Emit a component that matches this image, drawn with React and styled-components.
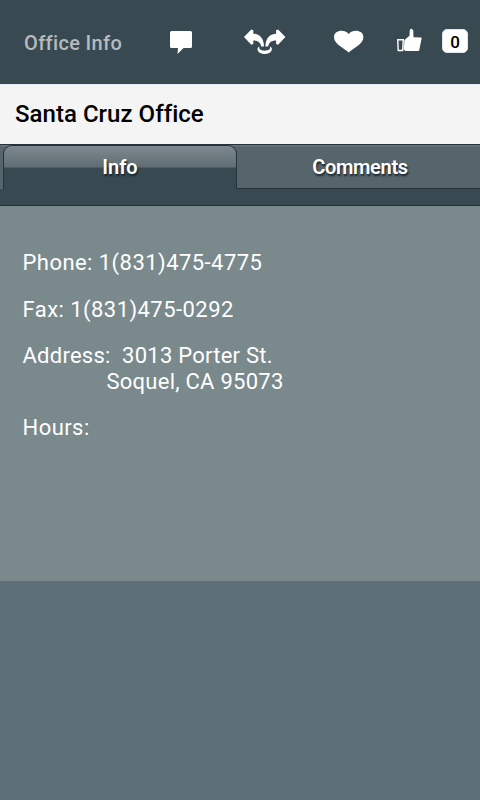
import React from 'react';
import styled, { createGlobalStyle } from 'styled-components';

const GlobalStyle = createGlobalStyle`
    body {
        margin: 0;
        background-color: #5d7078;
        font-family: Roboto, "Liberation Sans", sans-serif;
        font-variant-ligatures: none;
    }
`;

const Page = styled.div`
    display: flex;
    flex-direction: column;
    width: 480px;
    height: 800px;
    overflow: hidden;
    background-color: #5d7078;
`;

const Header = styled.header`
    display: flex;
    align-items: flex-start;
    box-sizing: border-box;
    height: 84px;
    padding: 28px 12px 0 24px;
    background-color: #394952;
`;

const HeaderTitle = styled.div`
    width: 146px;
    color: #b5bbbf;
    font-size: 20px;
    font-weight: 500;
    line-height: 30px;
    letter-spacing: 0.35px;
    white-space: nowrap;
`;

const Icon = styled.svg`
    display: block;
    flex: none;
    width: ${(props) => props.$width}px;
    height: 28px;
    margin-right: ${(props) => props.$gap}px;
    fill: #ffffff;
`;

const Count = styled.div`
    box-sizing: border-box;
    width: 26px;
    height: 24px;
    margin-top: 1px;
    border: 1px solid #dfe8ee;
    border-radius: 5px;
    background-color: #ffffff;
    color: #000000;
    font-size: 17px;
    font-weight: 500;
    line-height: 24px;
    text-align: center;
`;

const OfficeName = styled.h1`
    box-sizing: border-box;
    height: 60px;
    margin: 0;
    padding-left: 15px;
    border-top: 1px solid #e6eff5;
    background-color: #f4f4f4;
    color: #000000;
    font-size: 24px;
    font-weight: 500;
    line-height: 59px;
    letter-spacing: 0.03px;
`;

const TabBar = styled.nav`
    display: flex;
    box-sizing: border-box;
    height: 62px;
    border-top: 1px solid #26323b;
    border-bottom: 1px solid #222e36;
    background-color: #394952;
`;

const TabSlot = styled.div`
    box-sizing: border-box;
    width: ${(props) => props.$width}px;
    height: 44px;
    padding-left: ${(props) => (props.$active ? 3 : 0)}px;
    border-bottom: ${(props) => (props.$active ? 'none' : '1px solid #25323a')};
    background: linear-gradient(#66747a 0, #66747a 1px, #56656b 2px);
`;

const Tab = styled.div`
    box-sizing: border-box;
    height: ${(props) => (props.$active ? 44 : 43)}px;
    border: ${(props) => (props.$active ? '1px solid #25323a' : 'none')};
    border-bottom: none;
    border-radius: ${(props) => (props.$active ? '9px 9px 0 0' : '0')};
    background: ${(props) =>
        props.$active
            ? 'linear-gradient(#7d898e 0, #606d72 21px, #394952 22px)'
            : 'transparent'};
    color: #ffffff;
    font-size: 20px;
    font-weight: 600;
    line-height: ${(props) => (props.$active ? 42 : 44)}px;
    letter-spacing: ${(props) => (props.$active ? 0 : -0.3)}px;
    padding-left: ${(props) => (props.$active ? 0 : 3)}px;
    text-align: center;
    text-shadow: 1px 2px 2px #17232b;
`;

const Details = styled.main`
    box-sizing: border-box;
    height: 375px;
    padding: 44px 0 0 22.5px;
    background-color: #7a898c;
    color: #ffffff;
`;

const Detail = styled.p`
    margin: 0 0 ${(props) => props.$gap || 20}px;
    font-size: 22px;
    line-height: 26px;
    letter-spacing: ${(props) => props.$spacing || 0.45}px;
    white-space: pre;
`;

const City = styled.span`
    display: block;
    padding-left: 84px;
`;

const App = () => {
    return (
        <Page>
            <GlobalStyle />
            <Header>
                <HeaderTitle>Office Info</HeaderTitle>
                <Icon $width={22} $gap={52} viewBox="0 0 22 28">
                    <path d="M1.5 3h19q1.500 0 1.500 1.500v14q0 1.500-1.500 1.500H13.500L7.500 26 8 20H1.500Q0 20 0 18.500v-14Q0 3 1.500 3z" />
                </Icon>
                <Icon $width={42} $gap={48} viewBox="0 0 42 28">
                    <path d="M0 9 7.300 1.500 9.300 2.300 9.300 5.800C15.500 6 19.800 10 20 18.500L17.300 18.500C16.500 14.500 14 12.500 9.300 12.500L9.300 16 7.300 16.700z" />
                    <path d="M41.400 9 34.100 1.500 32.100 2.300 32.100 5.800C25.900 6 21.600 10 21.400 18.500L24.100 18.500C24.900 14.500 27.400 12.500 32.100 12.500L32.100 16 34.100 16.700z" />
                    <path d="M15.500 18.500C11.500 20 13.500 26 20.700 26S29.900 20 25.900 18.500C27 21 24.500 22.700 20.700 22.700S14.400 21 15.500 18.500z" />
                </Icon>
                <Icon $width={30} $gap={33} viewBox="0 0 30 28">
                    <path d="M14.700 24.500C11 20.500 0 16.500 0 9 0 2 10.500.500 14.700 6 19 .500 29.400 2 29.400 9 29.400 16.500 18.500 20.500 14.700 24.500z" />
                </Icon>
                <Icon $width={25} $gap={20} viewBox="0 0 25 28">
                    <path d="M.8 11.800H6.300L5.700 22.500H1.200z" fill="none" stroke="#ffffff" strokeWidth="1.400" />
                    <path d="M7.500 12 12.500 7.800 12.800 2Q14.500-.500 16.300 2.500L16.500 9.300 24.300 9.500Q25 10 24.500 11L22.300 22 21.500 23H8.500L6.700 21.500z" />
                </Icon>
                <Count>0</Count>
            </Header>
            <OfficeName>Santa Cruz Office</OfficeName>
            <TabBar>
                <TabSlot $active $width={237}>
                    <Tab $active>Info</Tab>
                </TabSlot>
                <TabSlot $width={243}>
                    <Tab>Comments</Tab>
                </TabSlot>
            </TabBar>
            <Details>
                <Detail $gap={21}>Phone: 1(831)475-4775</Detail>
                <Detail>Fax: 1(831)475-0292</Detail>
                <Detail $spacing={0.25}>
                    Address:  3013 Porter St.
                    <City>Soquel, CA 95073</City>
                </Detail>
                <Detail>Hours:</Detail>
            </Details>
        </Page>
    );
};

export default App;
